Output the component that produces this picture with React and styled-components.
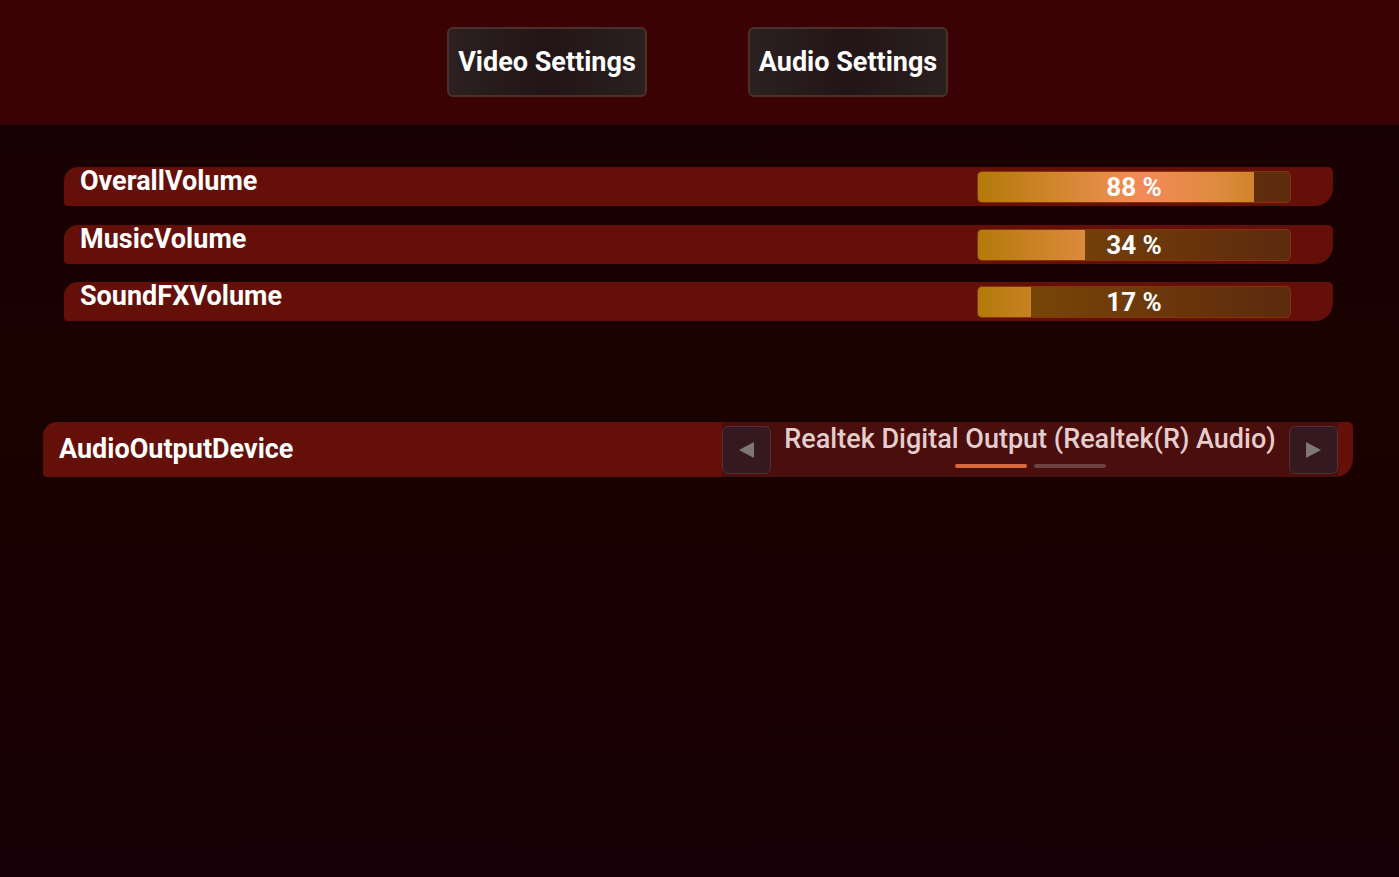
import React from 'react'
import styled, { createGlobalStyle } from 'styled-components'

const GlobalStyle = createGlobalStyle`
  html, body {
    margin: 0;
    padding: 0;
    height: 100%;
    background: #180006;
  }
  #root {
    min-height: 100%;
  }
  * {
    box-sizing: border-box;
  }
`

const volumes = [
  { id: 'overall', label: 'OverallVolume', value: 88 },
  { id: 'music', label: 'MusicVolume', value: 34 },
  { id: 'sfx', label: 'SoundFXVolume', value: 17 },
]

const TRACK_WIDTH = 314

const App = () => {
  return (
    <Page>
      <GlobalStyle />
      <Header>
        <TabButton>Video Settings</TabButton>
        <TabButton>Audio Settings</TabButton>
      </Header>

      <Content>
        <VolumeList>
          {volumes.map(item => (
            <VolumeRow key={item.id}>
              <Label>{item.label}</Label>
              <Track>
                <Fill style={{ width: `${(TRACK_WIDTH * item.value) / 100}px` }} />
                <Percent>{item.value} %</Percent>
              </Track>
            </VolumeRow>
          ))}
        </VolumeList>

        <DeviceRow>
          <Label>AudioOutputDevice</Label>
          <Selector>
            <ArrowButton>
              <Triangle $dir="left" />
            </ArrowButton>
            <SelectorBody>
              <SelectorText>Realtek Digital Output (Realtek(R) Audio)</SelectorText>
              <Dots>
                <Dot $active />
                <Dot />
              </Dots>
            </SelectorBody>
            <ArrowButton>
              <Triangle $dir="right" />
            </ArrowButton>
          </Selector>
        </DeviceRow>
      </Content>
    </Page>
  )
}

export default App

const Page = styled.div`
  width: 100%;
  min-height: 877px;
  font-family: Roboto, 'Liberation Sans', sans-serif;
  background: linear-gradient(180deg, #170006 0%, #1a0200 45%, #190100 60%, #170007 100%);
`

const Header = styled.header`
  height: 125px;
  background: #3a0204;
  display: flex;
  justify-content: center;
  align-items: flex-start;
  gap: 101px;
  padding: 27px 4px 0 0;
`

const TabButton = styled.button`
  width: 200px;
  height: 70px;
  border: 2px solid #4d3129;
  border-radius: 6px;
  background: linear-gradient(90deg, #2c2020 0%, #231517 50%, #2b1f1f 100%);
  color: #ffffff;
  font-family: Roboto, 'Liberation Sans', sans-serif;
  font-weight: 700;
  font-size: 27px;
  padding: 0;
  cursor: pointer;
`

const Content = styled.main`
  padding: 42px 0 0;
`

const VolumeList = styled.div`
  display: flex;
  flex-direction: column;
  gap: 18.5px;
  margin: 0 66px 0 64px;
`

const VolumeRow = styled.div`
  height: 39px;
  background: #641008;
  border-radius: 14px 5px 18px 4px;
  display: flex;
  justify-content: space-between;
  align-items: flex-start;
  padding: 0 42px 0 16px;
`

const Label = styled.span`
  color: #ffffff;
  font-weight: 700;
  font-size: 27px;
  line-height: 29px;
`

const Track = styled.div`
  position: relative;
  width: ${TRACK_WIDTH}px;
  height: 32px;
  margin-top: 4px;
  border-radius: 5px;
  overflow: hidden;
  border: 1px solid #8a3208;
  background: linear-gradient(90deg, #7c4a06 0%, #6e3a0a 50%, #5c2a0e 100%);
  display: flex;
  align-items: center;
  justify-content: center;
`

const Fill = styled.div`
  position: absolute;
  left: 0;
  top: 0;
  bottom: 0;
  background: linear-gradient(90deg, #b27a08 0%, #e58c46 40%, #f48a58 52%, #e08a40 75%, #c08018 100%);
  background-size: ${TRACK_WIDTH}px 100%;
  background-repeat: no-repeat;
`

const Percent = styled.span`
  position: relative;
  color: #ffffff;
  font-weight: 700;
  font-size: 26px;
  line-height: 30px;
`

const DeviceRow = styled.div`
  margin: 101px 46px 0 43px;
  height: 55px;
  background: #641008;
  border-radius: 14px 5px 18px 4px;
  display: flex;
  align-items: center;
  justify-content: space-between;
  padding: 0 15px 0 16px;
`

const Selector = styled.div`
  display: flex;
  align-items: center;
  height: 55px;
  width: 616px;
  background: #4a0e0c;
`

const ArrowButton = styled.button`
  width: 49px;
  height: 48px;
  flex: none;
  border: 1px solid #52303a;
  border-radius: 6px;
  background: #351820;
  display: flex;
  align-items: center;
  justify-content: center;
  padding: 0;
  cursor: pointer;
`

const Triangle = styled.span`
  width: 0;
  height: 0;
  border-top: 8px solid transparent;
  border-bottom: 8px solid transparent;
  ${p => (p.$dir === 'left' ? 'border-right: 15px solid #7e7778;' : 'border-left: 15px solid #7e7778;')}
`

const SelectorBody = styled.div`
  flex: 1;
  display: flex;
  flex-direction: column;
  align-items: center;
  height: 100%;
  padding-top: 0;
`

const SelectorText = styled.span`
  color: #e6cdcd;
  font-weight: 500;
  font-size: 27px;
  line-height: 34px;
  white-space: nowrap;
`

const Dots = styled.div`
  display: flex;
  gap: 7px;
  margin-top: 8px;
`

const Dot = styled.span`
  width: 72px;
  height: 4px;
  border-radius: 2px;
  background: ${p => (p.$active ? '#d8693f' : '#6c4244')};
`
